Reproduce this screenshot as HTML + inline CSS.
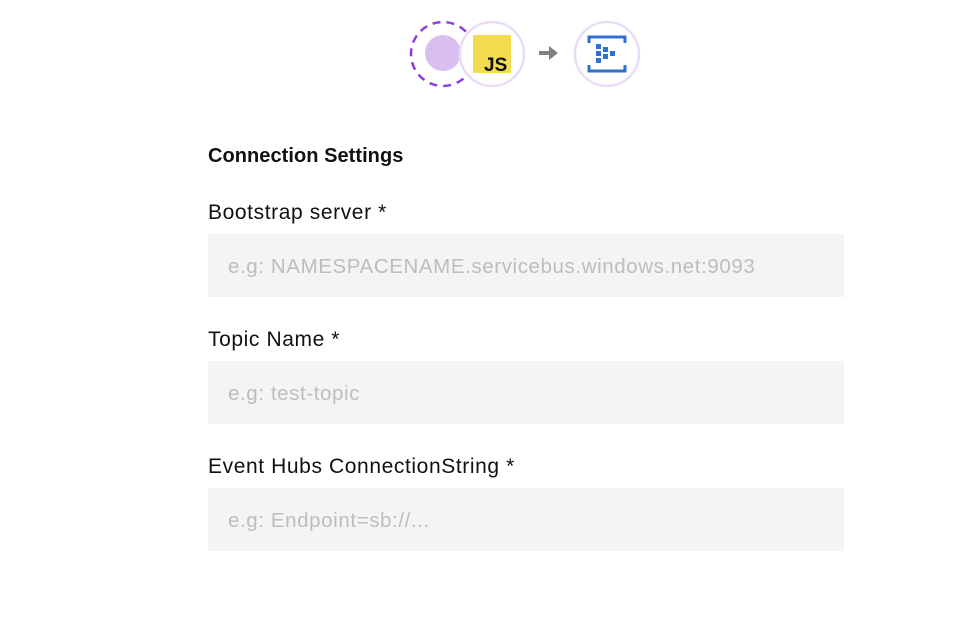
<!DOCTYPE html>
<html><head><style>
body{margin:0;width:960px;height:620px;background:#fff;font-family:"Liberation Sans",sans-serif;position:relative;overflow:hidden}
.t{position:absolute;left:208px;color:#111}
.l{font-size:21px;letter-spacing:0.6px}
.in{position:absolute;left:208px;width:636px;height:63px;background:#f4f4f4;color:#bdbdbd;font-size:20.5px;letter-spacing:0.6px;line-height:66px;padding-left:20px;box-sizing:border-box}
</style></head><body>
<svg width="960" height="110" style="position:absolute;left:0;top:0">
<circle cx="443" cy="54" r="32" fill="none" stroke="#8a3fd6" stroke-width="2.5" stroke-dasharray="8 6"/>
<circle cx="443" cy="53" r="18" fill="#d9bff0"/>
<circle cx="492" cy="54" r="32" fill="#fff" stroke="#eadcf7" stroke-width="2.5"/>
<rect x="473" y="35" width="38" height="38" fill="#f3dc4f"/>
<text x="484" y="71" font-family="Liberation Sans" font-weight="bold" font-size="19" fill="#111">JS</text>
<path d="M539 53h12" stroke="#808080" stroke-width="4"/>
<path d="M549 46l9 7-9 7z" fill="#808080"/>
<circle cx="607" cy="54" r="32" fill="#fff" stroke="#eadcf7" stroke-width="2.5"/>
<path d="M589 43v-6h36v6M589 65v6h36v-6" fill="none" stroke="#2f6fcf" stroke-width="3"/>
<rect x="596" y="44" width="5" height="5" fill="#2f6fcf"/>
<rect x="596" y="51" width="5" height="5" fill="#2f6fcf"/>
<rect x="596" y="58" width="5" height="5" fill="#2f6fcf"/>
<rect x="603" y="47" width="5" height="5" fill="#2f6fcf"/>
<rect x="603" y="54" width="5" height="5" fill="#2f6fcf"/>
<rect x="610" y="51" width="5" height="5" fill="#2f6fcf"/>
</svg>
<div class="t" style="top:145px;font-size:20px;font-weight:bold;letter-spacing:0.05px">Connection Settings</div>
<div class="t l" style="top:201px">Bootstrap server *</div>
<div class="in" style="top:234px">e.g: NAMESPACENAME.servicebus.windows.net:9093</div>
<div class="t l" style="top:328px">Topic Name *</div>
<div class="in" style="top:361px">e.g: test-topic</div>
<div class="t l" style="top:455px">Event Hubs ConnectionString *</div>
<div class="in" style="top:488px">e.g: Endpoint=sb://...</div>
</body></html>
